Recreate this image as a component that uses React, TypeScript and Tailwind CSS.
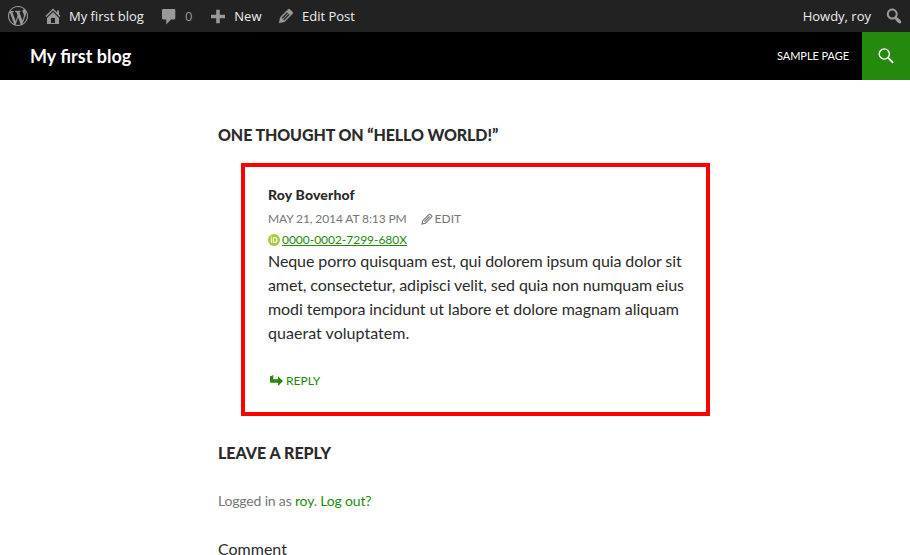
import React from "react";

const WP =
  "M20 10c0-5.51-4.49-10-10-10C4.48 0 0 4.49 0 10c0 5.52 4.48 10 10 10 5.51 0 10-4.48 10-10zM7.78 15.37L4.37 6.22c.55-.02 1.17-.08 1.17-.08.5-.06.44-1.13-.06-1.11 0 0-1.45.11-2.37.11-.18 0-.37 0-.58-.01C4.12 2.69 6.87 1.11 10 1.11c2.33 0 4.45.87 6.05 2.34-.68-.11-1.65.39-1.65 1.58 0 .74.45 1.36.9 2.1.35.61.55 1.36.55 2.46 0 1.49-1.4 5-1.4 5l-3.03-8.37c.54-.02.82-.17.82-.17.5-.05.44-1.25-.06-1.22 0 0-1.44.12-2.38.12-.87 0-2.33-.12-2.33-.12-.5-.03-.56 1.2-.06 1.22l.92.08 1.26 3.41zM17.41 10c.24-.64.74-1.87.43-4.25.7 1.29 1.05 2.71 1.05 4.25 0 3.29-1.73 6.24-4.4 7.78.97-2.59 1.94-5.2 2.92-7.78zM6.1 18.09C3.12 16.65 1.11 13.53 1.11 10c0-1.3.23-2.48.72-3.59C3.25 10.3 4.67 14.2 6.1 18.09zm4.03-6.63l2.58 6.98c-.86.29-1.76.45-2.71.45-.79 0-1.57-.11-2.29-.33.81-2.38 1.62-4.74 2.42-7.1z";
const HOME =
  "M16 8.5l1.53 1.53-1.06 1.06L10 4.6l-6.47 6.49-1.06-1.06L10 2.5l4 4v-2h2v4zm-6-2.46l6 5.99V18H4v-5.97zM12 17v-5H8v5h4z";
const COMMENT =
  "M4.2 3h10.900c.7 0 1.200.5 1.200 1.200v8.100c0 .7-.5 1.200-1.200 1.200H12L7.200 18.500v-5H4.200c-.7 0-1.200-.5-1.200-1.200V4.200C3 3.500 3.500 3 4.200 3z";
const PLUS = "M8.200 3.700h3.600v5h5.200v3.600h-5.200v5H8.200v-5H3V8.700h5.200z";
const EDIT =
  "M13.89 3.39l2.71 2.72c.46.46.42 1.24.03 1.64l-8.01 8.02-5.56 1.16 1.16-5.58s7.6-7.63 7.99-8.03c.39-.39 1.22-.39 1.68.07zm-2.73 2.79l-5.59 5.61 1.11 1.11 5.54-5.65zm-2.97 8.23l5.58-5.6-1.07-1.08-5.59 5.6z";
const SEARCH =
  "M12.14 4.18c1.87 1.87 2.11 4.75.72 6.89.12.1.22.21.36.31.2.16.47.36.81.59.34.24.56.39.66.47.42.31.73.57.94.78.32.32.6.65.84 1 .25.35.44.69.59 1.04.14.35.21.68.18 1-.02.32-.14.59-.36.81s-.49.34-.81.36c-.31.02-.65-.04-.99-.19-.35-.14-.7-.34-1.04-.59-.35-.24-.68-.52-1-.84-.21-.21-.47-.52-.77-.93-.1-.13-.25-.35-.47-.66-.22-.32-.4-.57-.56-.78-.16-.2-.29-.35-.44-.5-2.07 1.09-4.69.76-6.44-.98-2.14-2.15-2.14-5.64 0-7.78 2.15-2.15 5.63-2.15 7.78 0zm-1.41 6.36c1.36-1.37 1.36-3.58 0-4.95-1.37-1.37-3.59-1.37-4.95 0-1.37 1.37-1.37 3.58 0 4.95 1.36 1.37 3.58 1.37 4.95 0z";

function Icon({ d, className = "size-5" }: { d: string; className?: string }) {
  return (
    <svg viewBox="0 0 20 20" fill="currentColor" fillRule="evenodd" className={`shrink-0 text-[#999] ${className}`}>
      <path d={d} />
    </svg>
  );
}

function AdminBar() {
  return (
    <div className="flex h-8 items-center bg-[#222] pl-2 pr-1.5 font-['Open_Sans',sans-serif] text-[13px] leading-8 text-[#eee]">
      <Icon d={WP} />
      <div className="ml-[15px] flex items-center gap-1.5">
        <Icon d={HOME} />
        <span>My first blog</span>
      </div>
      <div className="ml-[15px] flex items-center gap-1.5">
        <Icon d={COMMENT} />
        <span className="text-[#999]">0</span>
      </div>
      <div className="ml-4 flex items-center gap-1.5">
        <Icon d={PLUS} />
        <span>New</span>
      </div>
      <div className="ml-[14.500px] flex items-center gap-1.5">
        <Icon d={EDIT} className="size-5 stroke-[#999] [stroke-width:0.3]" />
        <span>Edit Post</span>
      </div>
      <span className="ml-auto mr-[13px]">Howdy, roy</span>
      <Icon d={SEARCH} />
    </div>
  );
}

function SiteHeader() {
  return (
    <header className="flex h-12 items-center bg-black pl-[30px] text-white">
      <h1 className="text-[18px] leading-[48px] font-bold">My first blog</h1>
      <a className="ml-auto mr-[13px] text-[11px] tracking-[-0.06px] uppercase">Sample Page</a>
      <div className="flex size-12 items-center justify-center bg-[#24890d]">
        <svg viewBox="0 0 16 16" className="size-4" fill="none" stroke="white">
          <circle cx="6.300" cy="6" r="5.100" strokeWidth="1.400" />
          <path d="M10 9.700l5.200 5.200" strokeWidth="1.800" />
        </svg>
      </div>
    </header>
  );
}

function Comment() {
  return (
    <article className="ml-[23px] mt-4 h-[253px] w-[469px] border-4 border-[#f00] pl-[23px] pt-[17px]">
      <h3 className="text-[14px] leading-[22px] font-black tracking-[0.17px]">Roy Boverhof</h3>
      <div className="mt-[3px] flex h-5 items-center text-[12px] uppercase text-[#767676]">
        <span className="tracking-[-0.11px]">May 21, 2014 at 8:13 pm</span>
        <svg viewBox="0 0 12 12" className="ml-3.5 mr-0.5 size-3" fill="none" stroke="currentColor">
          <path d="M1 11l.8-3.300L8.200 1.300q.5-.5 1 0l1.500 1.500q.5.500 0 1L4.300 10.200zM3.300 8.700L8.500 3.500" strokeWidth="1.100" />
        </svg>
        <span>Edit</span>
      </div>
      <div className="mt-px flex h-5 items-center text-[12px]">
        <svg viewBox="0 0 12 12" className="mr-0.5 size-3">
          <circle cx="6" cy="6" r="6" fill="#a6ce39" />
          <path d="M3.500 4.500v4.300M5.400 3.700v4.600h1.300a2.300 2.300 0 0 0 0-4.600z" fill="none" stroke="white" strokeWidth="1.100" />
          <circle cx="3.500" cy="3.100" r=".6" fill="white" />
        </svg>
        <a className="tracking-[-0.03px] text-[#24890d] underline">0000-0002-7299-680X</a>
      </div>
      <p className="-mt-px w-[425px] text-[16px] leading-6">
        <span className="tracking-[-0.085px]">Neque porro quisquam est, qui dolorem ipsum quia dolor sit</span>
        <br />
        <span className="tracking-[-0.1px]">amet, consectetur, adipisci velit, sed quia non numquam eius</span>
        <br />
        <span className="tracking-[-0.07px]">modi tempora incidunt ut labore et dolore magnam aliquam</span>
        <br />
        <span className="tracking-[0.04px]">quaerat voluptatem.</span>
      </p>
      <div className="mt-[26px] flex h-5 items-center text-[12px] uppercase text-[#24890d]">
        <svg viewBox="0 0 14 12" className="ml-[1px] mr-[3px] h-3 w-3.5" fill="currentColor">
          <path d="M1 1.500L4.300 0v4.300H9V1.300L14 6l-5 5V7.800H2.200Q1 7.800 1 6.600z" />
        </svg>
        <a>Reply</a>
      </div>
    </article>
  );
}

export default function App() {
  return (
    <div className="min-h-[555px] w-[910px] bg-white font-[Lato,sans-serif] text-[#2b2b2b]">
      <AdminBar />
      <SiteHeader />
      <main className="ml-[218px] pt-[43px]">
        <h2 className="text-[16px] leading-6 font-black tracking-[-0.11px] uppercase">One thought on “Hello world!”</h2>
        <Comment />
        <h2 className="mt-[25px] text-[16px] leading-6 font-black uppercase">Leave a Reply</h2>
        <p className="mt-6 text-[14px] leading-6 tracking-[-0.17px] text-[#767676]">
          Logged in as <a className="text-[#24890d]">roy</a>. <a className="text-[#24890d]">Log out?</a>
        </p>
        <label className="mt-6 block h-[18px] text-[16px] leading-6">Comment</label>
      </main>
    </div>
  );
}
